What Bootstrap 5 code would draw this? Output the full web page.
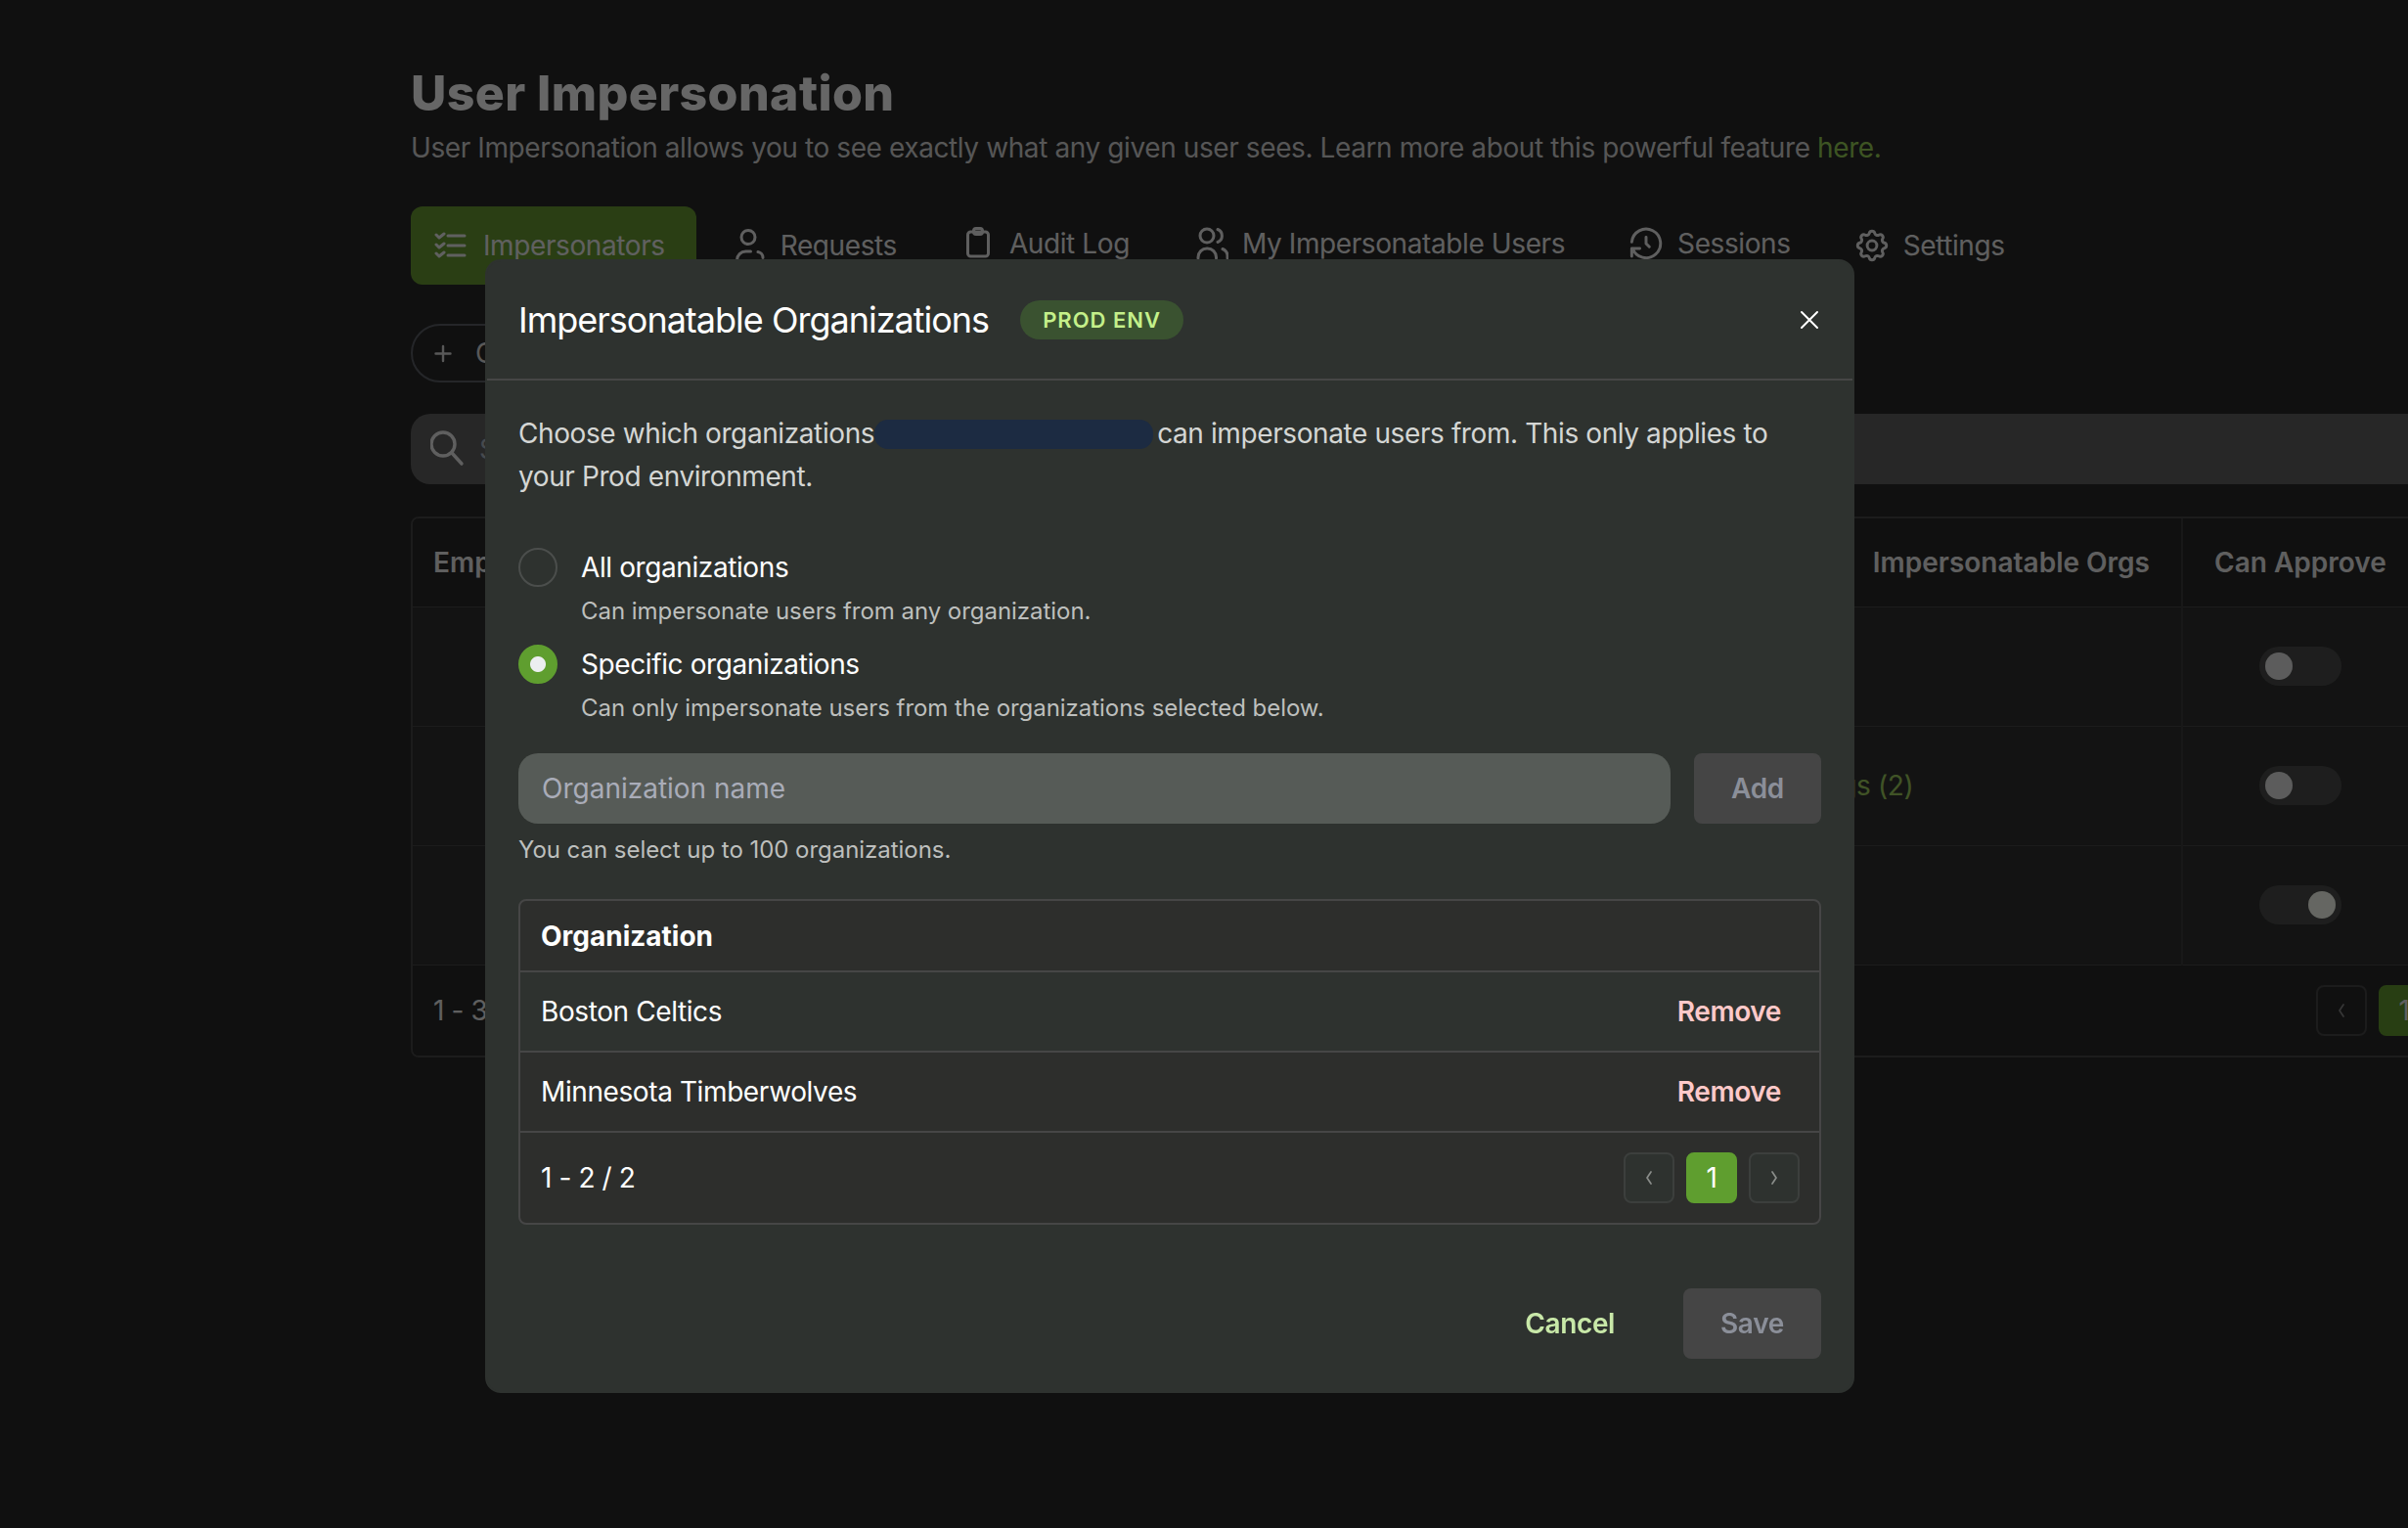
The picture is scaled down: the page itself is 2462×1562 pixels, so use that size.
<!doctype html>
<html lang="en" data-bs-theme="dark">
<head>
<meta charset="utf-8">
<title>User Impersonation</title>
<link href="https://cdn.jsdelivr.net/npm/bootstrap@5.3.0/dist/css/bootstrap.min.css" rel="stylesheet">
<style>
html,body{height:100%}
body{background:#292929;color:#fff;font-family:Inter,"Liberation Sans",sans-serif;font-size:28px;line-height:44px;letter-spacing:-.4px;overflow:hidden}
.ui-page{width:2162px;margin-left:420px;padding-top:65px}
.ui-title{font-size:50px;line-height:60px;font-weight:800;letter-spacing:.4px;margin:0 0 4px;color:#fff}
.ui-sub{margin:0 0 38px;color:#d6d6d6;white-space:nowrap}
.ui-sub a{color:#99d258;text-decoration:none}
.ui-tabs{gap:9px;height:80px;margin-bottom:40px;flex-wrap:nowrap}
.ui-tab{display:flex;align-items:center;gap:14px;height:80px;padding:0 32px 0 24px;border-radius:12px;color:#eee;white-space:nowrap;font-size:28px;text-decoration:none}
.ui-tab.active-tab{background:#699c32;color:#f0f0f0}
.ui-tab.raise{padding-bottom:4px}
.ui-tab.nudge{margin-left:3px}
.ui-ico{width:36px;height:36px;flex:none;fill:none;stroke:currentColor;stroke-width:3;stroke-linecap:round;stroke-linejoin:round}
.ui-create{height:60px;width:340px;border:2px solid #5c6067;border-radius:30px;background:transparent;color:#ddd;font-size:28px;padding:0 0 0 13px;gap:15px;margin-bottom:32px}
.ui-search{height:72px;background:#626262;border-radius:20px;padding:0 20px;gap:14px;margin-bottom:33px;color:#b0b8c4}
.ui-search svg{width:36px;height:40px;flex:none;fill:none;stroke:#eee;stroke-width:3.4;stroke-linecap:round}
.ui-grid{border:2px solid #464646;border-radius:8px 0 0 8px;background:#292929;overflow:hidden}
.ui-table{--bs-table-bg:transparent;--bs-table-color:#eee;--bs-table-border-color:#464646;table-layout:fixed;margin:0;width:100%}
.ui-table th{height:90px;padding:0 32px;font-weight:600;letter-spacing:0;vertical-align:middle;color:#eee;white-space:nowrap;background:#292929}
.ui-table td{height:122px;padding:0 32px;vertical-align:middle;background:#303030;color:#a0d060;white-space:nowrap}
.ui-table .sep{border-left:2px solid #3c3c3c}
.ui-table th:first-child{padding-left:21px}
.ui-switch{width:84px;height:40px;background:#4b4d4b;border-radius:20px;padding:6px;display:flex;margin:0 auto}
.ui-switch i{display:block;width:28px;height:28px;border-radius:50%;background:#e6e6e6}
.ui-switch.on{justify-content:flex-end}
.ui-switch.on i{background:#fcfff4}
.ui-foot{height:92px;padding:0 32px 0 21px;color:#eee;background:#292929}
.ui-pager{gap:12px;margin:0;--bs-pagination-border-width:0}
.ui-pager .page-link{width:52px;height:52px;display:flex;align-items:center;justify-content:center;padding:0;border:2px solid #464646;background:#292929;border-radius:8px!important;margin:0!important;color:#888;font-size:28px}
.ui-pager .active>.page-link{background:#649c30;border-color:#649c30;color:#eee}
.ui-pager svg{width:18px;height:18px;fill:none;stroke:currentColor;stroke-width:1.7;stroke-linecap:round;stroke-linejoin:round}

.ui-dim{opacity:.6;background:#000}
.ui-modal{overflow:hidden}
.ui-dialog{width:1400px;max-width:none;margin:265px 0 0 496px}
.ui-sheet{background:#2e322f;border:2px solid #2e322f;border-radius:16px;color:#fff}
.ui-head{height:120px;padding:0 32px;border-bottom:2px solid #464646;border-radius:0;box-sizing:content-box;display:flex;align-items:center}
.ui-head .modal-title{font-size:36px;line-height:44px;font-weight:400;letter-spacing:-1px}
.ui-tag{display:inline-flex;align-items:center;height:40px;padding:0 23px;margin-left:32px;border-radius:20px;background:#3a5230;color:#c4f08a;font-size:22px;font-weight:600;letter-spacing:1px}
.ui-x{margin-left:auto;width:20px;height:20px;padding:0;border:0;background:none;margin-right:2px;display:flex}
.ui-x svg{width:20px;height:20px;stroke:#fff;stroke-width:2;stroke-linecap:round}
.ui-body{padding:32px 32px 0}
.ui-intro{margin:0 0 51px;color:#d4d6d4}
.ui-redact{display:inline-block;width:285px;height:30px;background:#1c2b42;border-radius:14px;margin:0 4px 0 0;vertical-align:-6px}
.ui-choice{display:flex;gap:24px;margin:0 0 16px;padding:0;min-height:0}
.ui-choice .form-check-input{width:40px;height:40px;margin:0;float:none;flex:none;background-color:transparent;border:2px solid #4b4e4c;box-shadow:none}
.ui-choice .form-check-input:checked{background-color:#5f9e2f;border-color:#5f9e2f;background-image:radial-gradient(circle,#eceef0 0 7.5px,transparent 8.5px);--bs-form-check-bg-image:none}
.ui-choice label{display:block;line-height:40px;color:#fff}
.ui-hint{font-size:24px;line-height:36px;letter-spacing:-.04px;color:#bdbfbd}
.ui-choice .ui-hint{margin-top:7px}
.ui-addrow{gap:24px;margin-top:28px}
.ui-input.form-control{height:72px;background:#565b57;border:0;border-radius:20px;padding:0 24px;color:#fff;font-size:28px;box-shadow:none}
.ui-input::placeholder{color:#a9acb8;opacity:1}
.ui-btn.btn{height:72px;border:0;border-radius:8px;background:#454545;color:#8b8f99;font-size:28px;font-weight:600;line-height:1;opacity:1;padding:0;letter-spacing:-.3px}
.ui-orgs{margin-top:32px;border:2px solid #464646;border-radius:8px;overflow:hidden;background:#2d2e2c}
.ui-otable{--bs-table-bg:transparent;--bs-table-color:#fff;--bs-table-border-color:#464646;margin:0;width:100%}
.ui-otable th{height:72px;padding:0 21px;font-weight:700;letter-spacing:0;vertical-align:middle;border-bottom:2px solid #464646;color:#fff}
.ui-otable td{height:82px;padding:0 21px;vertical-align:middle;border-bottom:2px solid #464646;color:#fff}
.ui-otable tr.tint td{background:#2e322f}
.ui-otable td:last-child{text-align:right;padding-right:39px;width:200px}
.ui-rm{color:#ffc9c9;font-weight:600;text-decoration:none}
.ui-ofoot{height:92px;padding:0 20px 0 21px;color:#fff}
.ui-ofoot .page-link{background:#2e322f;border-color:#3c3f3d;color:#8a8d8a}
.ui-ofoot .active>.page-link{background:#5f9e2f;border-color:#5f9e2f;color:#fff}
.ui-actions{margin:65px 32px 0 0;padding-bottom:33px;gap:70px;justify-content:flex-end}
.ui-cancel{color:#c8e8a8;font-weight:600;text-decoration:none}
</style>
</head>
<body>
<main class="ui-page">
  <h1 class="ui-title">User Impersonation</h1>
  <p class="ui-sub">User Impersonation allows you to see exactly what any given user sees. Learn more about this powerful feature <a href="#">here.</a></p>

  <nav class="nav ui-tabs">
    <a class="ui-tab active-tab" href="#">
      <svg class="ui-ico" viewBox="0 0 36 36"><path d="M2 7l3 3 5-4M2 17l3 3 5-4M2 26l3 3 5-4M14 8h17M14 18h17M14 28h17"/></svg><span>Impersonators</span></a>
    <a class="ui-tab nudge" href="#">
      <svg class="ui-ico" viewBox="0 0 36 36"><circle cx="17" cy="9.500" r="7"/><path d="M5.500 34v-1a9 9 0 0 1 9-9h5M27 24.500a6 6 0 0 1 5 6"/></svg><span>Requests</span></a>
    <a class="ui-tab raise" href="#">
      <svg class="ui-ico" viewBox="0 0 36 36"><rect x="7.500" y="6" width="21" height="25" rx="3"/><rect x="13.500" y="2.500" width="9" height="6" rx="2.500"/></svg><span>Audit Log</span></a>
    <a class="ui-tab raise" href="#">
      <svg class="ui-ico" viewBox="0 0 36 36"><circle cx="14" cy="10" r="7"/><path d="M25 3.500a7 7 0 0 1 0 13M5 33v-1a9 9 0 0 1 9-9h.500a9 9 0 0 1 9 9v1M30 23.500a8 8 0 0 1 5 8v1.500"/></svg><span>My Impersonatable Users</span></a>
    <a class="ui-tab raise" href="#">
      <svg class="ui-ico" viewBox="1 1 22 22" style="stroke-width:1.8"><path d="M12 8v4l2 2M3.050 11a9 9 0 1 1 .5 4m-.5 5v-5h5"/></svg><span>Sessions</span></a>
    <a class="ui-tab" href="#">
      <svg class="ui-ico" viewBox="1 1 22 22" style="stroke-width:1.8"><path d="M10.325 4.317c.426-1.756 2.924-1.756 3.350 0a1.724 1.724 0 0 0 2.573 1.066c1.543-.94 3.310.826 2.370 2.370a1.724 1.724 0 0 0 1.065 2.572c1.756.426 1.756 2.924 0 3.350a1.724 1.724 0 0 0-1.066 2.573c.94 1.543-.826 3.310-2.370 2.370a1.724 1.724 0 0 0-2.572 1.065c-.426 1.756-2.924 1.756-3.350 0a1.724 1.724 0 0 0-2.573-1.066c-1.543.94-3.310-.826-2.370-2.370a1.724 1.724 0 0 0-1.065-2.572c-1.756-.426-1.756-2.924 0-3.350a1.724 1.724 0 0 0 1.066-2.573c-.94-1.543.826-3.310 2.370-2.370c1 .608 2.296.07 2.572-1.065z"/><circle cx="12" cy="12" r="3"/></svg><span>Settings</span></a>
  </nav>

  <div class="ui-create d-flex align-items-center">
    <svg class="ui-ico" viewBox="0 0 36 36" style="stroke-width:2.4"><path d="M18 11v15M10.500 18.500h15"/></svg><span>Create</span>
  </div>

  <div class="ui-search d-flex align-items-center">
    <svg viewBox="0 0 36 40"><circle cx="13" cy="15" r="12"/><path d="M22 24l10 11"/></svg><span>Search</span>
  </div>

  <div class="ui-grid">
    <table class="table ui-table">
      <colgroup><col style="width:1268px"><col style="width:541px"><col style="width:240px"><col></colgroup>
      <thead><tr><th>Employee</th><th class="text-end">Impersonatable Orgs</th><th class="sep">Can Approve</th><th></th></tr></thead>
      <tbody>
        <tr><td></td><td></td><td class="sep"><div class="ui-switch"><i></i></div></td><td></td></tr>
        <tr><td></td><td style="padding-left:32px"><span class="d-block" style="margin-left:17px">Specific Orgs (2)</span></td><td class="sep"><div class="ui-switch"><i></i></div></td><td></td></tr>
        <tr><td></td><td></td><td class="sep"><div class="ui-switch on"><i></i></div></td><td></td></tr>
      </tbody>
    </table>
    <div class="ui-foot d-flex align-items-center justify-content-between">
      <span>1 - 3 / 3</span>
      <ul class="pagination ui-pager">
        <li class="page-item"><a class="page-link" href="#"><svg viewBox="0 0 18 18"><path d="M11 3l-4 6 4 6"/></svg></a></li>
        <li class="page-item active"><a class="page-link" href="#">1</a></li>
        <li class="page-item"><a class="page-link" href="#"><svg viewBox="0 0 18 18"><path d="M7 3l4 6-4 6"/></svg></a></li>
      </ul>
    </div>
  </div>
</main>

<div class="modal-backdrop ui-dim"></div>

<div class="modal d-block ui-modal" tabindex="-1">
  <div class="modal-dialog ui-dialog">
    <div class="modal-content ui-sheet">
      <div class="modal-header ui-head">
        <h2 class="modal-title">Impersonatable Organizations</h2>
        <span class="ui-tag">PROD ENV</span>
        <button type="button" class="ui-x" aria-label="Close"><svg viewBox="0 0 20 20"><path d="M2 2l16 16M18 2L2 18"/></svg></button>
      </div>
      <div class="modal-body ui-body">
        <p class="ui-intro">Choose which organizations<span class="ui-redact"></span>can impersonate users from. This only applies to your Prod environment.</p>

        <div class="form-check ui-choice">
          <input class="form-check-input" type="radio" name="scope" id="scopeAll">
          <div><label for="scopeAll">All organizations</label><div class="ui-hint">Can impersonate users from any organization.</div></div>
        </div>
        <div class="form-check ui-choice">
          <input class="form-check-input" type="radio" name="scope" id="scopeSome" checked>
          <div><label for="scopeSome">Specific organizations</label><div class="ui-hint">Can only impersonate users from the organizations selected below.</div></div>
        </div>

        <div class="d-flex ui-addrow">
          <input class="form-control ui-input flex-grow-1" type="text" placeholder="Organization name">
          <button type="button" class="btn ui-btn flex-shrink-0" style="width:130px" disabled>Add</button>
        </div>
        <div class="ui-hint" style="margin-top:9px">You can select up to 100 organizations.</div>

        <div class="ui-orgs">
          <table class="table ui-otable">
            <thead><tr><th colspan="2">Organization</th></tr></thead>
            <tbody>
              <tr class="tint"><td>Boston Celtics</td><td><a class="ui-rm" href="#">Remove</a></td></tr>
              <tr><td>Minnesota Timberwolves</td><td><a class="ui-rm" href="#">Remove</a></td></tr>
            </tbody>
          </table>
          <div class="ui-ofoot d-flex align-items-center justify-content-between">
            <span>1 - 2 / 2</span>
            <ul class="pagination ui-pager">
              <li class="page-item"><a class="page-link" href="#"><svg viewBox="0 0 18 18"><path d="M11 3l-4 6 4 6"/></svg></a></li>
              <li class="page-item active"><a class="page-link" href="#">1</a></li>
              <li class="page-item"><a class="page-link" href="#"><svg viewBox="0 0 18 18"><path d="M7 3l4 6-4 6"/></svg></a></li>
            </ul>
          </div>
        </div>
      </div>
      <div class="d-flex align-items-center ui-actions">
        <a class="ui-cancel" href="#">Cancel</a>
        <button type="button" class="btn ui-btn" style="width:141px" disabled>Save</button>
      </div>
    </div>
  </div>
</div>
<script src="https://cdn.jsdelivr.net/npm/bootstrap@5.3.0/dist/js/bootstrap.bundle.min.js"></script>
</body>
</html>
